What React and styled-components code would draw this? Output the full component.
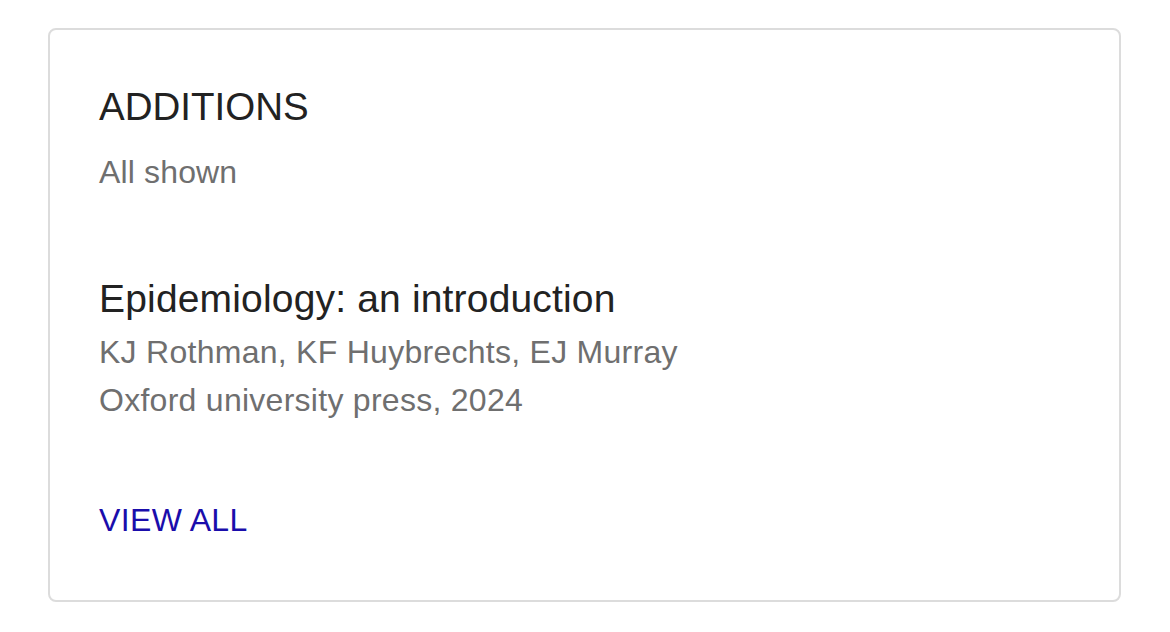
import React from 'react';
import styled, { createGlobalStyle } from 'styled-components';

const GlobalStyle = createGlobalStyle`
  html, body {
    margin: 0;
    padding: 0;
    background: #fff;
  }
  body {
    font-family: 'Liberation Sans', Arial, sans-serif;
  }
`;

const Page = styled.div`
  padding: 28px 49px 30px 48px;
`;

const Card = styled.section`
  box-sizing: border-box;
  height: 574px;
  border: 2px solid #dcdcdc;
  border-radius: 8px;
  padding: 54px 49px 0 49px;
  display: flex;
  flex-direction: column;
`;

const Heading = styled.h2`
  margin: 0;
  font-size: 38.5px;
  line-height: 46px;
  font-weight: 400;
  color: #222;
`;

const Note = styled.div`
  margin-top: 22px;
  font-size: 32px;
  line-height: 40px;
  letter-spacing: 0.15px;
  color: #6f6f6f;
`;

const Entry = styled.article`
  margin-top: 84px;
  display: flex;
  flex-direction: column;
`;

const Title = styled.h3`
  margin: 0;
  font-size: 39px;
  line-height: 46px;
  font-weight: 400;
  letter-spacing: 0.17px;
  color: #222;
`;

const Meta = styled.div`
  margin-top: ${(p) => (p.$first ? '6px' : '0')};
  font-size: 32px;
  line-height: 48px;
  letter-spacing: 0.27px;
  color: #6f6f6f;
`;

const ViewAll = styled.a`
  margin-top: 76px;
  align-self: flex-start;
  font-size: 32px;
  line-height: 40px;
  letter-spacing: 0.35px;
  color: #1a0dab;
  text-decoration: none;
`;

const articles = [
  {
    title: 'Epidemiology: an introduction',
    authors: 'KJ Rothman, KF Huybrechts, EJ Murray',
    source: 'Oxford university press, 2024',
  },
];

export default function App() {
  return (
    <>
      <GlobalStyle />
      <Page>
        <Card>
          <Heading>ADDITIONS</Heading>
          <Note>All shown</Note>
          {articles.map((a) => (
            <Entry key={a.title}>
              <Title>{a.title}</Title>
              <Meta $first>{a.authors}</Meta>
              <Meta>{a.source}</Meta>
            </Entry>
          ))}
          <ViewAll href="#">VIEW ALL</ViewAll>
        </Card>
      </Page>
    </>
  );
}
